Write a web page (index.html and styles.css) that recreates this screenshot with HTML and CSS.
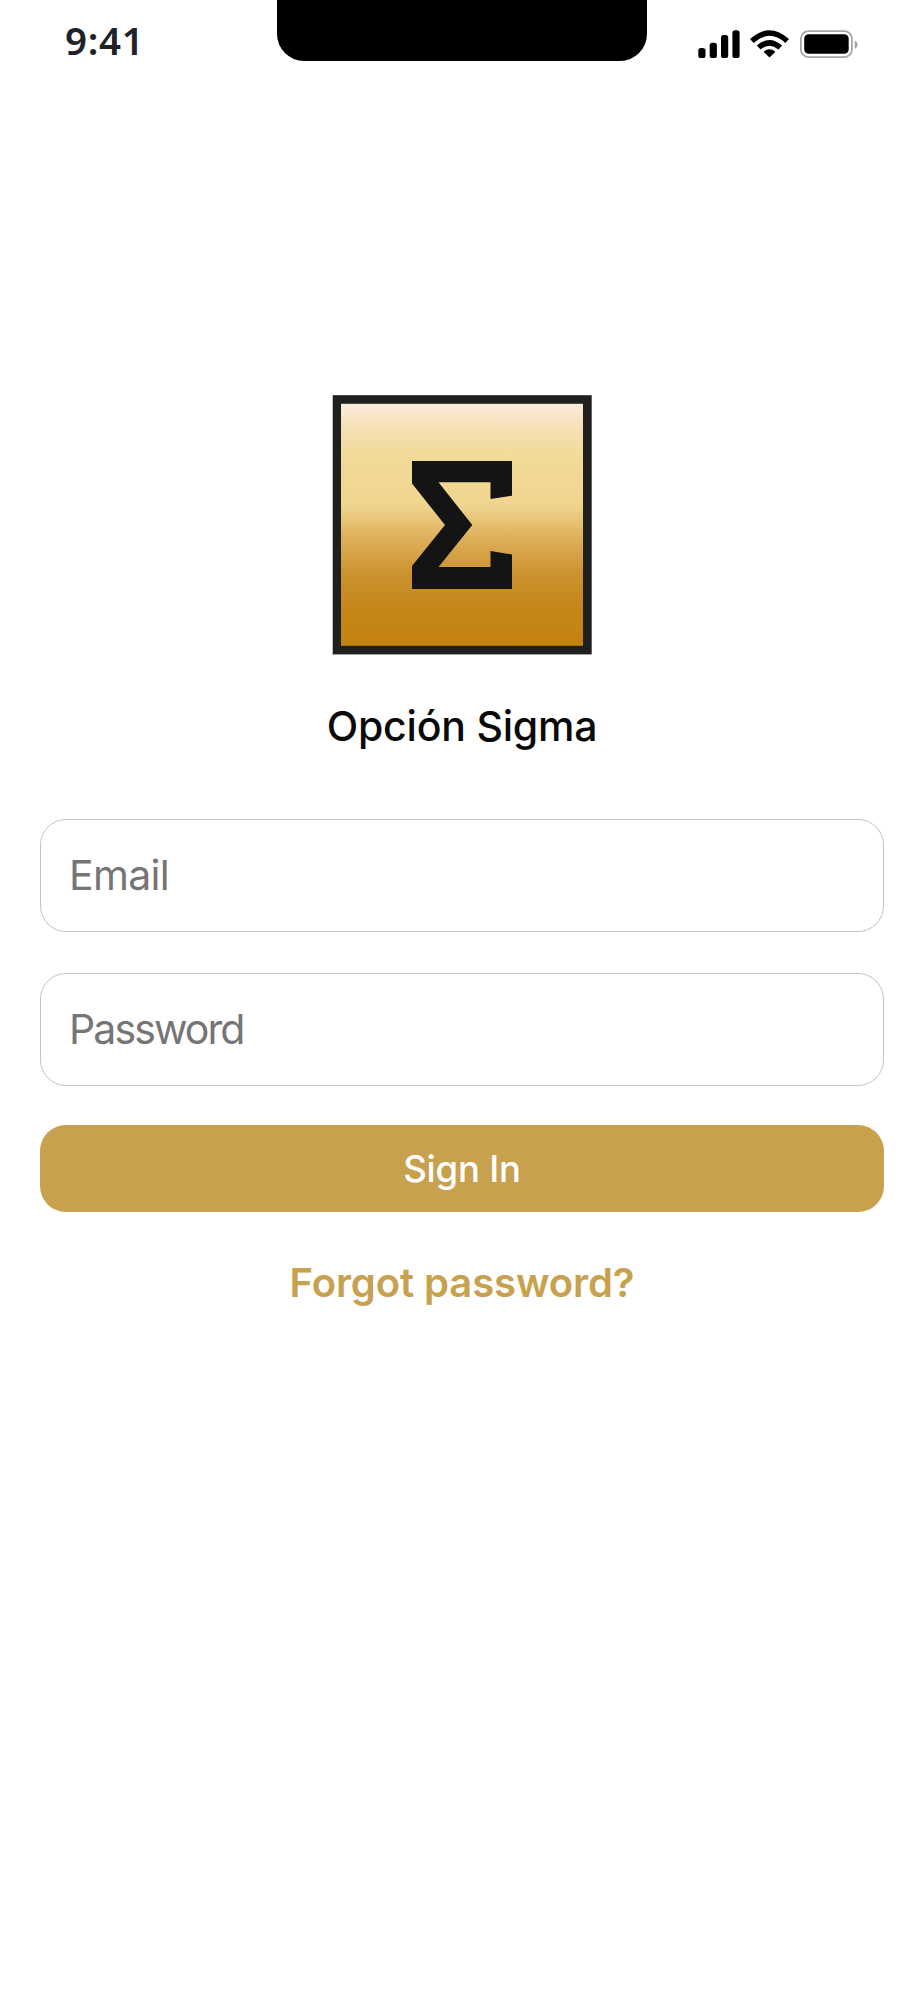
FILE: index.html
```html
<!DOCTYPE html>
<html lang="es">
<head>
    <meta charset="UTF-8">
    <meta name="viewport" content="width=device-width, initial-scale=1.0">
    <title>Opción Sigma</title>
    <link rel="stylesheet" href="styles.css">
</head>
<body>
    <!-- Status Bar -->
    <header class="status-bar">
        <span class="time">9:41</span>
        <div class="notch"></div>
        <svg class="status-icons" width="160" height="28" viewBox="0 0 160 28">
            <!-- Signal -->
            <rect x="0.3" y="18" width="7.2" height="10" rx="2.6" />
            <rect x="11.7" y="12.7" width="7.2" height="15.3" rx="2.6" />
            <rect x="23" y="5" width="7.2" height="23" rx="2.6" />
            <rect x="34.4" y="0.3" width="7.2" height="27.7" rx="2.6" />
            <!-- Wifi -->
            <path d="M52 9.1 Q71.5 -8.7 91 9.1 L87.3 12.9 Q71.5 -1.3 55.7 12.9 Z" />
            <path d="M58.8 15.6 Q71.5 4.2 84.2 15.6 L80.4 19.4 Q71.5 12 62.6 19.4 Z" />
            <path d="M65.6 21.7 Q71.5 16.8 77.4 21.7 L71.5 27.5 Z" />
            <!-- Battery -->
            <rect x="102.9" y="1.1" width="51" height="26" rx="7.5" fill="none" stroke="#a6a6a6" stroke-width="1.8" />
            <rect x="106.2" y="4.3" width="44.5" height="19.4" rx="4.5" />
            <path d="M156.7 10.4 Q159.7 11.8 159.7 14.5 T156.7 19 Z" fill="#a6a6a6" />
        </svg>
    </header>

    <!-- Login Form -->
    <main class="login">
        <svg class="logo" width="260" height="260" viewBox="0 0 260 260">
            <defs>
                <linearGradient id="gold" x1="0" y1="0" x2="0" y2="1">
                    <stop offset="0" stop-color="#f9ecdc" />
                    <stop offset="0.1" stop-color="#f5e0b5" />
                    <stop offset="0.22" stop-color="#f2da97" />
                    <stop offset="0.42" stop-color="#f0d58f" />
                    <stop offset="0.55" stop-color="#deb05c" />
                    <stop offset="0.7" stop-color="#cc9230" />
                    <stop offset="0.85" stop-color="#c5861a" />
                    <stop offset="1" stop-color="#c4830f" />
                </linearGradient>
            </defs>
            <rect x="0.7" y="0.2" width="259" height="259.2" fill="#1f201e" />
            <rect x="9" y="8.8" width="242" height="242" fill="url(#gold)" />
            <polygon fill="#141414" points="80,66 180,66 180,100.7 158.5,104 158.5,87.3 106.5,87.3 140.3,130 106.5,172 158.5,172 158.5,156 180,159.5 180,194 80,194 80,171 113,130 80,88.5" />
        </svg>
        <h1>Opción Sigma</h1>
        <form>
            <input type="email" placeholder="Email">
            <input type="password" placeholder="Password">
            <button type="button">Sign In</button>
        </form>
        <a class="forgot" href="#">Forgot password?</a>
    </main>
</body>
</html>
```
FILE: styles.css
```css
* {
    box-sizing: border-box;
}

body {
    margin: 0;
    min-height: 2000px;
    background-color: #fff;
    font-family: Inter, "Liberation Sans", sans-serif;
}

/* Status Bar */
.status-bar {
    display: grid;
    grid-template-columns: 277px 370px 1fr;
    align-items: start;
    height: 61px;
}

.time {
    padding: 14px 0 0 65px;
    font-family: "Noto Sans", sans-serif;
    font-size: 38.5px;
    font-weight: 600;
    line-height: 52px;
    letter-spacing: 0.7px;
    color: #1f2328;
}

.notch {
    height: 61px;
    background: #000;
    border-radius: 0 0 27px 27px;
}

.status-icons {
    margin: 30px 0 0 51px;
}

/* Login */
.login {
    display: flex;
    flex-direction: column;
    align-items: center;
    padding: 334px 40px 0;
}

.logo {
    display: block;
}

h1 {
    margin: 46px 0 0;
    font-size: 41px;
    font-weight: 500;
    line-height: 50px;
    letter-spacing: -0.2px;
    color: #090909;
}

form {
    display: flex;
    flex-direction: column;
    width: 100%;
    margin-top: 68px;
}

input {
    width: 100%;
    height: 113px;
    margin-bottom: 41px;
    padding: 0 28px 2px;
    border: 1px solid #c3c3c3;
    border-radius: 26px;
    background: #fff;
    font-family: inherit;
    font-size: 41px;
    outline: none;
}

input::placeholder {
    color: #757575;
    letter-spacing: -0.7px;
    opacity: 1;
}

input[type="password"]::placeholder {
    letter-spacing: -1.9px;
}

button {
    height: 87px;
    margin-top: -2px;
    padding: 0;
    border: none;
    border-radius: 26px;
    background-color: #c7a14e;
    color: #fff;
    font-family: inherit;
    font-size: 36.5px;
    font-weight: 500;
    letter-spacing: -0.2px;
    cursor: pointer;
}

.forgot {
    margin-top: 46px;
    font-size: 40px;
    font-weight: 600;
    line-height: 50px;
    letter-spacing: -0.1px;
    color: #c7a14e;
    text-decoration: none;
}
```
